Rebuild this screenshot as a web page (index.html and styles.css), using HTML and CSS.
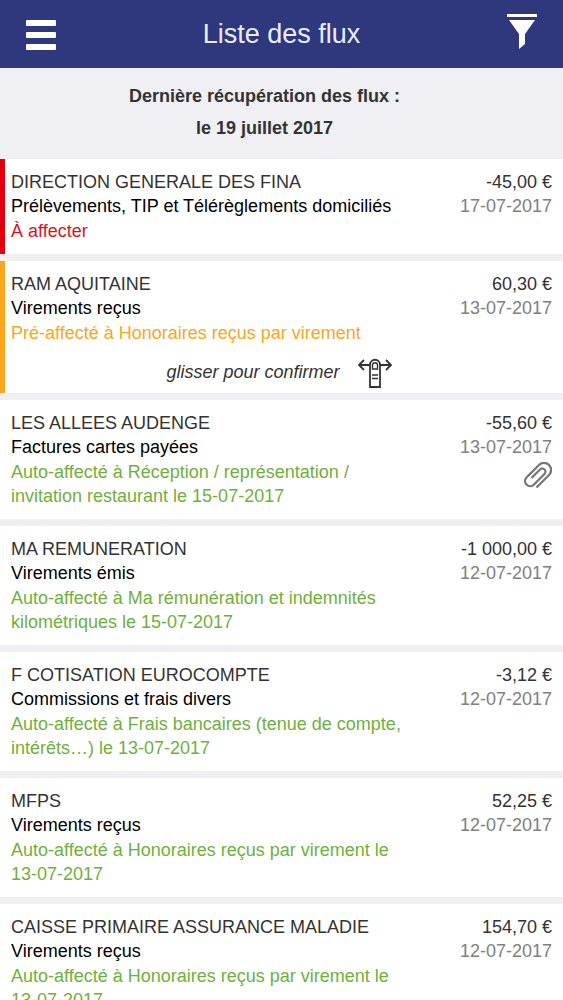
FILE: index.html
```html
<!DOCTYPE html>
<html lang="fr">
<head>
  <meta charset="UTF-8" />
  <meta name="viewport" content="width=device-width, initial-scale=1.0" />
  <title>Liste des flux</title>
  <link rel="stylesheet" href="styles.css">
</head>
<body>
  <header class="topbar">
    <button type="button" class="icon-button" aria-label="Menu">
      <svg width="30" height="30" viewBox="0 0 30 30" fill="#fff">
        <rect x="0" y="0" width="30" height="6" rx="1" />
        <rect x="0" y="12" width="30" height="6" rx="1" />
        <rect x="0" y="24" width="30" height="6" rx="1" />
      </svg>
    </button>
    <h1>Liste des flux</h1>
    <button type="button" class="icon-button filter" aria-label="Filtrer">
      <svg width="30" height="35" viewBox="0 0 30 35" fill="#fff">
        <rect x="0" y="0" width="30" height="3" />
        <path d="M2 6 H28 L18 20 V30 L12 35 V20 Z" />
      </svg>
    </button>
  </header>

  <main>
    <div class="summary">
      <p>Dernière récupération des flux :</p>
      <p>le 19 juillet 2017</p>
    </div>

    <ul class="flux-list">
      <li class="flux todo">
        <div class="details">
          <h2>DIRECTION GENERALE DES FINA</h2>
          <p class="type">Prélèvements, TIP et Télérèglements domiciliés</p>
          <p class="status">À affecter</p>
        </div>
        <div class="amounts">
          <p class="amount">-45,00 €</p>
          <p class="date">17-07-2017</p>
        </div>
      </li>

      <li class="flux pending">
        <div class="details">
          <h2>RAM AQUITAINE</h2>
          <p class="type">Virements reçus</p>
          <p class="status">Pré-affecté à Honoraires reçus par virement</p>
        </div>
        <div class="amounts">
          <p class="amount">60,30 €</p>
          <p class="date">13-07-2017</p>
        </div>
        <div class="swipe">
          <span>glisser pour confirmer</span>
          <svg width="34" height="32" viewBox="0 0 34 32" fill="none" stroke="#333" stroke-width="1.8">
            <path d="M12 9 H1 M6 4 L1 9 L6 14" />
            <path d="M22 9 H33 M28 4 L33 9 L28 14" />
            <path d="M12 31 V9 C12 2 22 2 22 9 V31 Z" />
            <path d="M14.5 13 V9 C14.5 6 19.5 6 19.5 9 V13 Z" stroke-width="1.4" />
            <path d="M14 19 H20 M14 22.500 H20" stroke-width="1.6" />
          </svg>
        </div>
      </li>

      <li class="flux">
        <div class="details">
          <h2>LES ALLEES AUDENGE</h2>
          <p class="type">Factures cartes payées</p>
          <p class="status">Auto-affecté à Réception / représentation / invitation restaurant le 15-07-2017</p>
        </div>
        <div class="amounts">
          <p class="amount">-55,60 €</p>
          <p class="date">13-07-2017</p>
          <svg class="clip" width="28" height="28" viewBox="0 0 28 28" fill="none" stroke="#777" stroke-width="2.3">
            <path d="M12.500 25.500 L25 13 A7 7 0 0 0 15 3 L2.500 15.500 A5 5 0 0 0 10 22.500 L20.500 12 A3 3 0 0 0 16 7.500 L7.500 16" />
          </svg>
        </div>
      </li>

      <li class="flux">
        <div class="details">
          <h2>MA REMUNERATION</h2>
          <p class="type">Virements émis</p>
          <p class="status">Auto-affecté à Ma rémunération et indemnités kilométriques le 15-07-2017</p>
        </div>
        <div class="amounts">
          <p class="amount">-1 000,00 €</p>
          <p class="date">12-07-2017</p>
        </div>
      </li>

      <li class="flux">
        <div class="details">
          <h2>F COTISATION EUROCOMPTE</h2>
          <p class="type">Commissions et frais divers</p>
          <p class="status">Auto-affecté à Frais bancaires (tenue de compte, intérêts…) le 13-07-2017</p>
        </div>
        <div class="amounts">
          <p class="amount">-3,12 €</p>
          <p class="date">12-07-2017</p>
        </div>
      </li>

      <li class="flux">
        <div class="details">
          <h2>MFPS</h2>
          <p class="type">Virements reçus</p>
          <p class="status">Auto-affecté à Honoraires reçus par virement le 13-07-2017</p>
        </div>
        <div class="amounts">
          <p class="amount">52,25 €</p>
          <p class="date">12-07-2017</p>
        </div>
      </li>

      <li class="flux">
        <div class="details">
          <h2>CAISSE PRIMAIRE ASSURANCE MALADIE</h2>
          <p class="type">Virements reçus</p>
          <p class="status">Auto-affecté à Honoraires reçus par virement le 13-07-2017</p>
        </div>
        <div class="amounts">
          <p class="amount">154,70 €</p>
          <p class="date">12-07-2017</p>
        </div>
      </li>
    </ul>
  </main>
</body>
</html>
```
FILE: styles.css
```css
* {
  box-sizing: border-box;
}

body {
  margin: 0;
  font-family: "Liberation Sans", Arial, sans-serif;
  font-size: 18px;
  line-height: 24px;
  color: #333;
  background: #efeff4;
}

h1, h2, p, ul {
  margin: 0;
  padding: 0;
  font-weight: 400;
}

.topbar {
  display: flex;
  align-items: center;
  justify-content: space-between;
  height: 68px;
  padding: 0 26px;
  background: #2f377d;
  color: #e9edff;
}

.topbar h1 {
  font-size: 27px;
  line-height: 32px;
}

.icon-button {
  display: flex;
  padding: 2px 0 0;
  border: none;
  background: none;
  cursor: pointer;
}

.icon-button.filter {
  padding: 0 0 6px;
}

.summary {
  padding: 12px 45px 15px 11px;
  text-align: center;
}

.summary p {
  font-size: 18px;
  font-weight: 700;
  line-height: 32px;
}

.flux-list {
  display: flex;
  flex-direction: column;
  gap: 7px;
  list-style: none;
}

.flux {
  display: flex;
  flex-wrap: wrap;
  justify-content: space-between;
  padding: 11px 11px 11px 6px;
  border-left: 5px solid #fff;
  background: #fff;
}

.details {
  width: 74%;
}

.flux h2 {
  font-size: 18px;
}

.type {
  line-height: 25px;
  color: #000;
}

.status {
  color: #6fb03c;
}

.amounts {
  display: flex;
  flex-direction: column;
  align-items: flex-end;
}

.date {
  line-height: 25px;
  color: #808080;
}

.clip {
  margin-top: 2px;
}

.todo {
  border-left-color: #e2000f;
}

.todo .status {
  color: #e01018;
}

.pending {
  border-left-color: #fba61c;
  padding-bottom: 5px;
}

.pending .status {
  color: #fba61c;
}

.swipe {
  display: flex;
  align-items: center;
  justify-content: center;
  gap: 18px;
  width: 100%;
  margin-top: 11px;
  padding-right: 5px;
  font-style: italic;
}
```
